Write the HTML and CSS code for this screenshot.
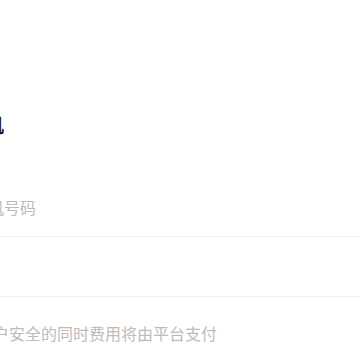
FILE: index.html
```html
<!DOCTYPE html>
<html lang="zh-CN">
<head>
<meta charset="utf-8">
<link rel="stylesheet" href="styles.css">
</head>
<body>
<div class="page">
  <h1 class="title">绑定手机</h1>
  <div class="field"><span class="placeholder">请输入手机号码</span></div>
  <div class="field"><span class="placeholder"></span></div>
  <p class="note">在保障用户安全的同时费用将由平台支付</p>
</div>
</body>
</html>
```

FILE: styles.css
```css
html, body {
  margin: 0;
  padding: 0;
  background: #ffffff;
}
body {
  width: 360px;
  height: 360px;
  overflow: hidden;
  font-family: "Noto Sans CJK SC", "Noto Sans", sans-serif;
}
.page {
  margin-left: -76px;
  padding-top: 111px;
  display: flex;
  flex-direction: column;
}
.title {
  margin: 0;
  font-size: 20px;
  line-height: 28px;
  font-weight: 700;
  color: #1a1a1a;
}
.field {
  height: 59px;
  border-bottom: 1px solid #eeeeee;
  display: flex;
  align-items: center;
}
.title + .field {
  margin-top: 38px;
}
.placeholder {
  font-size: 16px;
  line-height: 22px;
  color: #bbbbbb;
}
.note {
  margin: 25px 0 0;
  padding-left: 5px;
  font-size: 16px;
  line-height: 22px;
  color: #bbbbbb;
}
```
